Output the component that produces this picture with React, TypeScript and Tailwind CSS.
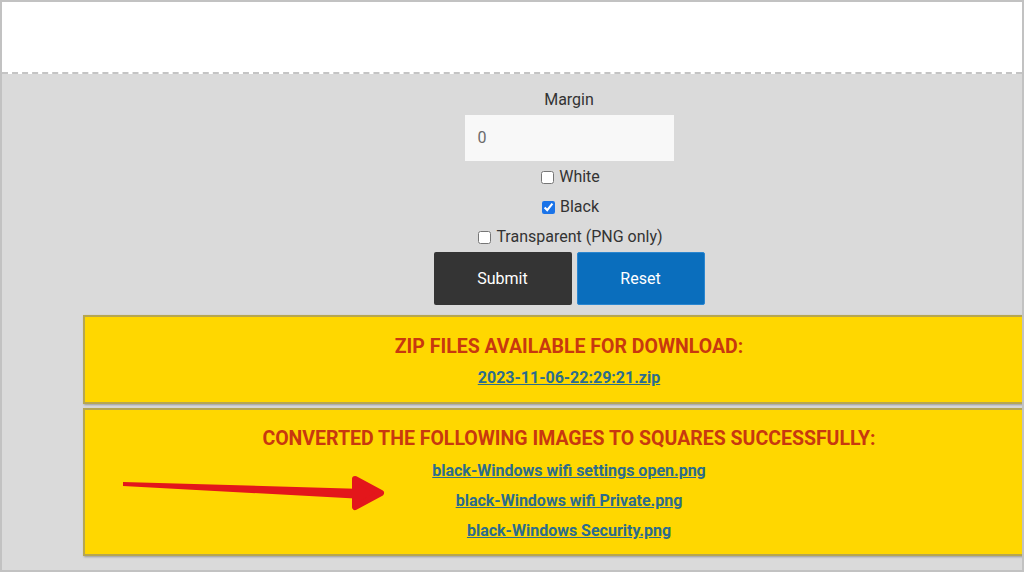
import React from 'react';

const files = [
  'black-Windows wifi settings open.png',
  'black-Windows wifi Private.png',
  'black-Windows Security.png',
];

function Option({ label, checked }: { label: string; checked?: boolean }) {
  return (
    <label className="flex h-[30px] items-center justify-center gap-[2px] text-[16px] text-[#333]">
      <input type="checkbox" defaultChecked={checked} className="m-[3px] h-[13px] w-[13px] accent-[#1a73e8]" />
      <span>{label}</span>
    </label>
  );
}

export default function App() {
  return (
    <div
      className="relative h-[572px] w-[1024px] overflow-hidden border-2 border-[#c2c2c2] bg-[#dadada]"
      style={{ fontFamily: 'Roboto, "Liberation Sans", sans-serif' }}
    >
      <div className="h-[72px] border-b-2 border-dashed border-[#c4c4c4] bg-white" />

      <div className="ml-[81px] w-[972px] pt-[14px]">
        <p className="text-center text-[16px] leading-6 text-[#333]">Margin</p>
        <div className="mt-[3px] flex justify-center">
          <div className="flex h-[46px] w-[209px] items-center bg-[#f8f8f8] pl-[13px] text-[16px] text-[#6b6b6b]">0</div>
        </div>

        <div className="pt-px">
          <Option label="White" />
          <Option label="Black" checked />
          <Option label="Transparent (PNG only)" />
        </div>

        <div className="flex justify-center gap-[5px]">
          <button type="button" className="h-[53px] w-[138px] rounded-[2px] bg-[#343434] text-[16px] font-normal text-white">
            Submit
          </button>
          <button type="button" className="h-[53px] w-[128px] rounded-[2px] border border-[#2a86d0] bg-[#0a6ebd] text-[16px] font-normal text-white">
            Reset
          </button>
        </div>

        <section className="mt-[10px] h-[89px] border-2 border-[#b6a650] bg-[#ffd700] pt-[18px] text-center shadow-[1px_1px_2px_rgba(0,0,0,0.3)]">
          <h2 className="text-[19.5px] font-bold leading-6 text-[#c8380f]">ZIP FILES AVAILABLE FOR DOWNLOAD:</h2>
          <a href="#" className="mt-[7px] block text-[16px] font-bold leading-6 text-[#2c6c8c] underline">
            2023-11-06-22:29:21.zip
          </a>
        </section>

        <section className="mt-[4px] h-[148px] border-2 border-[#b6a650] bg-[#ffd700] pt-[17px] text-center shadow-[1px_1px_2px_rgba(0,0,0,0.3)]">
          <h2 className="text-[19.5px] font-bold leading-6 text-[#c8380f]">
            CONVERTED THE FOLLOWING IMAGES TO SQUARES SUCCESSFULLY:
          </h2>
          <div className="mt-[8px] flex flex-col items-center gap-[6px]">
            {files.map((f) => (
              <a key={f} href="#" className="text-[16px] font-bold leading-6 text-[#2c6c8c] underline">
                {f}
              </a>
            ))}
          </div>
        </section>
      </div>

      {/* annotation arrow */}
      <svg className="pointer-events-none absolute left-0 top-0" width="1024" height="572" viewBox="0 0 1024 572">
        <polygon points="121,480 121,484 362,497 362,487" fill="#e3161b" />
        <path
          d="M353,477 L379,491 L353,505 Z"
          fill="#e3161b"
          stroke="#e3161b"
          strokeWidth="6"
          strokeLinejoin="round"
          strokeLinecap="round"
        />
      </svg>
    </div>
  );
}
